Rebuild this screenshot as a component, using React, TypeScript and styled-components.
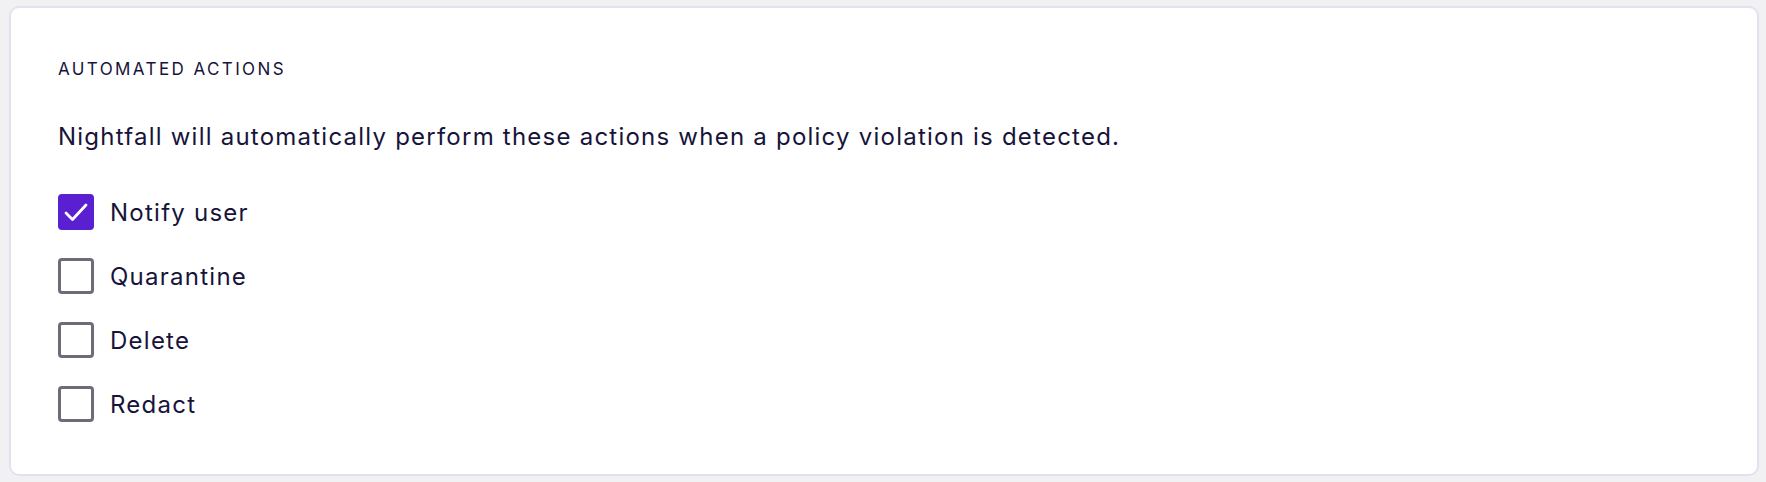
import React, { useState } from 'react'
import styled, { createGlobalStyle } from 'styled-components';

const GlobalStyle = createGlobalStyle`
  body {
    margin: 0;
    background-color: #f1f1f3;
    font-family: Inter, "Open Sans", sans-serif;
    color: #17143a;
  }
`;

const Card = styled.div`
  margin: 6px 7px 6px 9px;
  border: 2px solid #e2e2ee;
  border-radius: 10px;
  background-color: #ffffff;
  padding: 49px 47px 52px 47px;
`;

const SectionTitle = styled.h2`
  margin: 0;
  font-size: 17px;
  line-height: 24px;
  font-weight: 400;
  letter-spacing: 2.4px;
  text-transform: uppercase;
`;

const Description = styled.p`
  margin: 40px 0 0 0;
  font-size: 24px;
  line-height: 32px;
  letter-spacing: 1.23px;
`;

const OptionList = styled.div`
  margin-top: 41px;
  display: flex;
  flex-direction: column;
  gap: 28px;
`;

const OptionRow = styled.label`
  display: flex;
  align-items: center;
  gap: 16px;
  height: 36px;
  font-size: 24px;
  letter-spacing: 1.25px;
  cursor: pointer;
`;

const Box = styled.span<{ $checked: boolean }>`
  box-sizing: border-box;
  width: 36px;
  height: 36px;
  flex-shrink: 0;
  border-radius: 4px;
  border: ${p => (p.$checked ? 'none' : '3px solid #6d6b77')};
  background-color: ${p => (p.$checked ? '#5a1fd0' : '#ffffff')};
  display: flex;
  align-items: center;
  justify-content: center;
`;

const options = ['Notify user', 'Quarantine', 'Delete', 'Redact'];

const App = () => {
  const [checked, setChecked] = useState<string[]>(['Notify user']);

  const toggle = (name: string) => {
    setChecked(prev => prev.includes(name) ? prev.filter(n => n !== name) : [...prev, name])
  }

  return (
    <>
      <GlobalStyle />
      <Card>
        <SectionTitle>Automated actions</SectionTitle>
        <Description>Nightfall will automatically perform these actions when a policy violation is detected.</Description>
        <OptionList>
          {options.map(name => {
            const on = checked.includes(name);
            return (
              <OptionRow key={name} onClick={() => toggle(name)}>
                <Box $checked={on}>
                  {on && (
                    <svg width="36" height="36" viewBox="0 0 36 36" fill="none">
                      <polyline points="8,19 14.5,25.5 28,11" stroke="#ffffff" strokeWidth="2.8" strokeLinecap="round" strokeLinejoin="round" />
                    </svg>
                  )}
                </Box>
                {name}
              </OptionRow>
            );
          })}
        </OptionList>
      </Card>
    </>
  );
}

export default App
